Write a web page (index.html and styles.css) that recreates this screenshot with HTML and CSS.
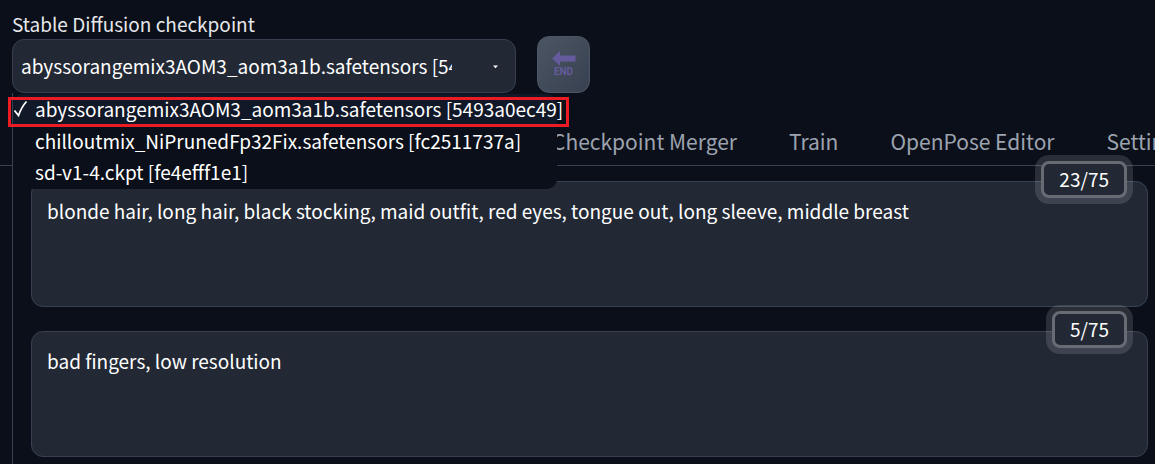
FILE: index.html
```
<!DOCTYPE html>
<html lang="en">
<head>
<meta charset="utf-8">
<meta name="viewport" content="width=device-width, initial-scale=1">
<title>Stable Diffusion</title>
<link rel="stylesheet" href="styles.css">
</head>
<body>
<header class="quicksettings">
  <div class="field">
    <label class="field-label" for="checkpoint">Stable Diffusion checkpoint</label>
    <div class="select-wrap">
      <select class="select" id="checkpoint">
        <option selected>abyssorangemix3AOM3_aom3a1b.safetensors [5493a0ec49]</option>
        <option>chilloutmix_NiPrunedFp32Fix.safetensors [fc2511737a]</option>
        <option>sd-v1-4.ckpt [fe4efff1e1]</option>
      </select>
      <svg class="caret" viewBox="0 0 6 4" aria-hidden="true"><path d="M0 0.5h5L2.5 3.2z" fill="#fff"/></svg>
      <ul class="menu" role="listbox" aria-label="Stable Diffusion checkpoint">
        <li class="option option-selected" role="option" aria-selected="true"><svg class="tick" viewBox="0 0 16 18" aria-hidden="true"><path d="M1.5 10.5L5.5 15.5Q8.5 7 13.5 1.5" fill="none" stroke="#fff" stroke-width="1.8"/></svg>abyssorangemix3AOM3_aom3a1b.safetensors [5493a0ec49]</li>
        <li class="option" role="option" aria-selected="false">chilloutmix_NiPrunedFp32Fix.safetensors [fc2511737a]</li>
        <li class="option" role="option" aria-selected="false">sd-v1-4.ckpt [fe4efff1e1]</li>
      </ul>
    </div>
  </div>
  <button class="tool" type="button">
    <svg class="arrow" viewBox="0 0 24 16" aria-hidden="true"><path d="M0 7.5L8 0V4.5H23.5V10.5H8V15z" fill="#655a9c"/></svg>
    <span class="tool-text">END</span>
  </button>
</header>
<nav class="tabs" aria-label="Sections">
  <span class="tab-active"></span>
  <button class="tab" type="button">Checkpoint Merger</button>
  <button class="tab" type="button">Train</button>
  <button class="tab" type="button">OpenPose Editor</button>
  <button class="tab" type="button">Settings</button>
</nav>
<main class="panel">
  <div class="prompt">
    <textarea class="prompt-input" aria-label="Prompt" spellcheck="false">blonde hair, long hair, black stocking, maid outfit, red eyes, tongue out, long sleeve, middle breast</textarea>
    <span class="counter">23/75</span>
  </div>
  <div class="prompt">
    <textarea class="prompt-input" aria-label="Negative prompt" spellcheck="false">bad fingers, low resolution</textarea>
    <span class="counter">5/75</span>
  </div>
</main>
</body>
</html>
```
FILE: styles.css
```
* { box-sizing: border-box; }
body {
  margin: 0;
  overflow: hidden;
  background: #0b0f19;
  color: #fff;
  font: 19px/28px "Noto Sans CJK SC", "Noto Sans", sans-serif;
}
button, select, textarea { font: inherit; color: inherit; }
.quicksettings {
  display: flex;
  align-items: flex-end;
  gap: 21px;
  padding: 10px 12px 0;
}
.field { width: 504px; }
.field-label { display: block; padding-bottom: 1px; color: #e5e7eb; }
.select-wrap { position: relative; }
.select {
  display: block;
  width: 100%;
  height: 54px;
  padding: 0 63px 0 8px;
  border: 1px solid #374151;
  border-radius: 12px;
  background: #222935;
  appearance: none;
}
.caret { position: absolute; right: 17px; top: 26px; width: 6px; height: 4px; }
.menu {
  position: absolute;
  z-index: 2;
  top: 100%;
  left: 1px;
  width: 544px;
  margin: 0;
  padding: 1px 0 2px;
  list-style: none;
  white-space: nowrap;
  border-radius: 10px;
  background: #0b0f19;
}
.option { position: relative; padding: 2px 0 1px 22px; }
.option-selected {
  padding: 1px 0 2px 22px;
  border-radius: 10px 10px 0 0;
  background: #111827;
}
.option-selected::after {
  content: "";
  position: absolute;
  inset: 3px -12px -2px -5px;
  border: 3px solid #ed1c24;
}
.tick { position: absolute; left: 0; top: 6px; width: 16px; height: 18px; }
.tool {
  display: flex;
  flex-direction: column;
  align-items: center;
  justify-content: center;
  width: 53px;
  height: 57px;
  padding: 0 0 2px;
  border: 1px solid #4b5563;
  border-radius: 12px;
  background: linear-gradient(to bottom right, #4b5563, #374151);
}
.arrow { width: 24px; height: 16px; }
.tool-text { color: #655a9c; font: bold 10px/10px Roboto, sans-serif; }
.tabs {
  display: flex;
  height: 73px;
  padding-left: 12px;
  border-bottom: 1px solid #374151;
}
.tab-active {
  flex: 0 0 514px;
  margin-bottom: -1px;
  border-left: 1px solid #374151;
  background: #0b0f19;
}
.tab {
  flex: none;
  padding: 24px 26px 0;
  border: 0;
  background: none;
  color: #9ca3af;
  font-size: 21px;
}
.panel {
  display: flex;
  flex-direction: column;
  gap: 24px;
  margin-left: 12px;
  padding: 15px 7px 24px 18px;
  border-left: 1px solid #374151;
}
.prompt { position: relative; }
.prompt-input {
  display: block;
  width: 100%;
  height: 126px;
  padding: 15px;
  border: 1px solid #374151;
  border-radius: 12px;
  background: #222935;
  resize: none;
}
.counter {
  position: absolute;
  top: -20px;
  right: 21px;
  padding: 1px 15px 2px;
  border: 3px solid #676b73;
  border-radius: 8px;
  background: #222935;
  box-shadow: 0 0 0 6px rgba(255, 255, 255, 0.13);
}
```
